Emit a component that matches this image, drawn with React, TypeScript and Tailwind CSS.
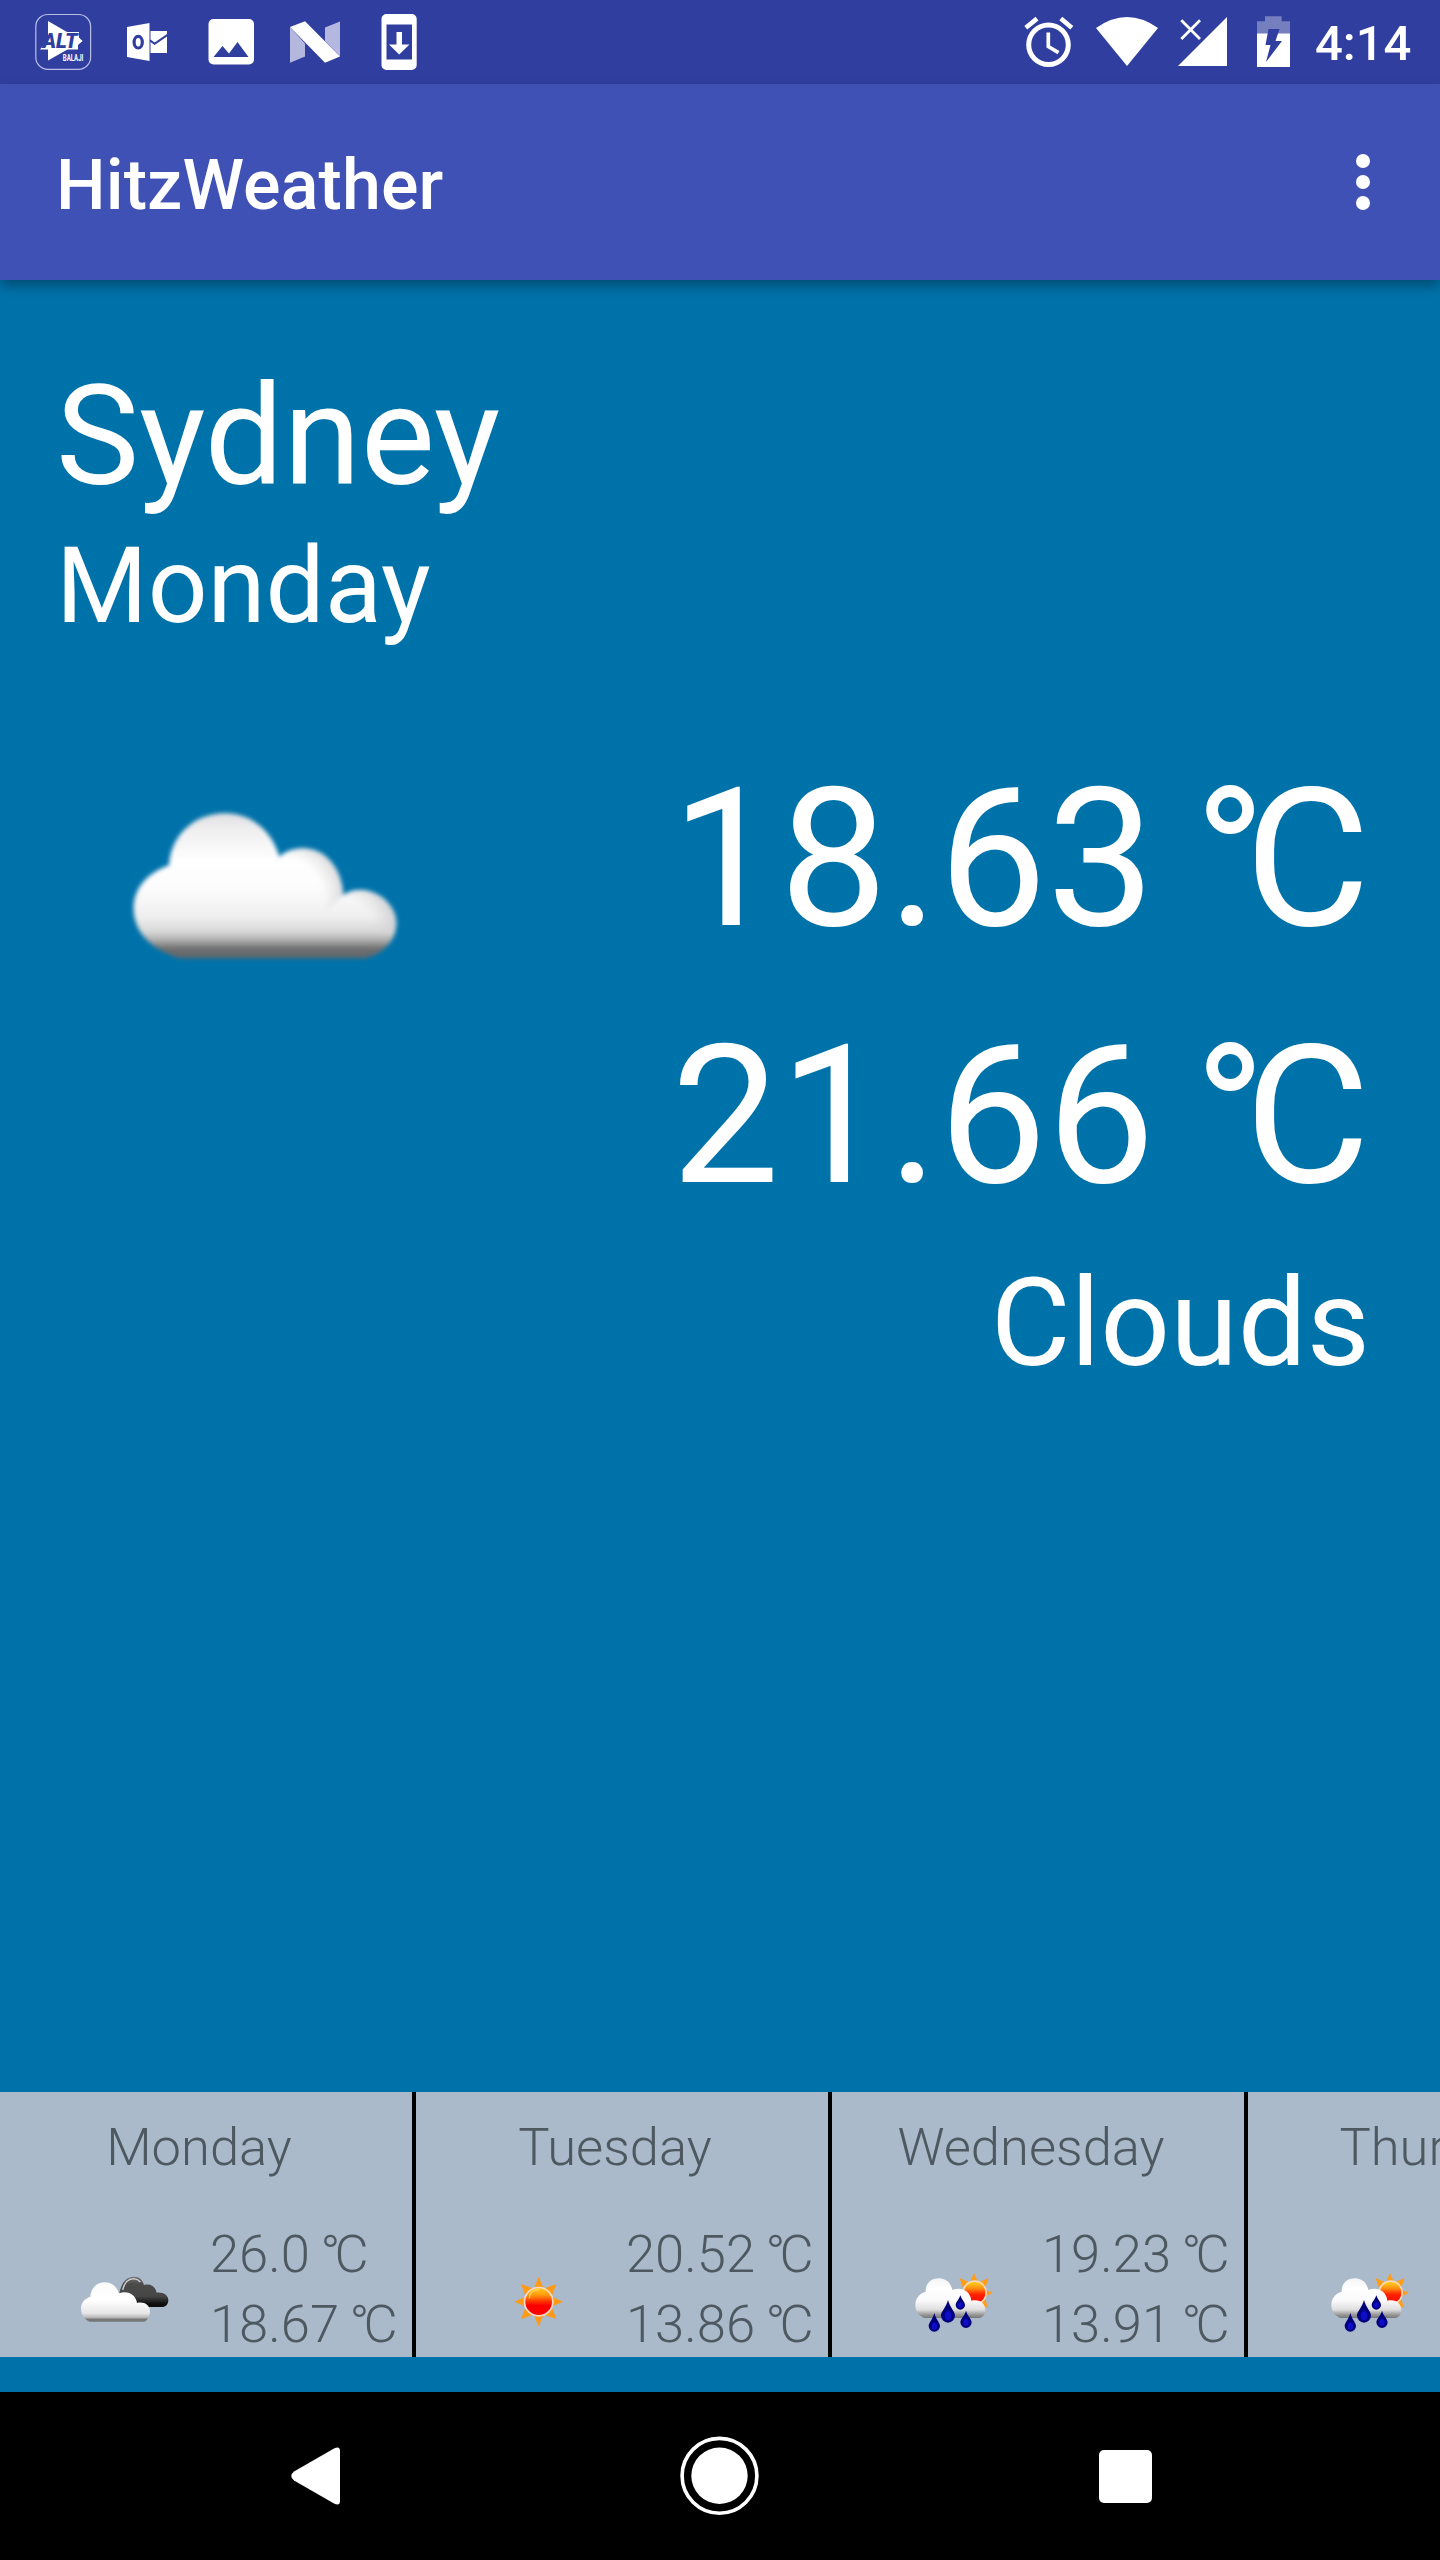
import React from "react";

function AltBalajiIcon() {
  return (
    <svg className="h-[84px] w-[84px]" viewBox="0 0 84 84">
      <rect x="14.800" y="14.500" width="54.800" height="54.800" rx="12" fill="none" stroke="#b9bfe4" strokeWidth="1.2" />
      <path d="M27 21 L61.5 41 L27 60.5 Z" fill="#fff" />
      <path d="M19 49.500 L33 32 H58 V37.500 L61.500 41 L57 45 V49.500 Z" fill="#fff" />
      <text
        x="21.500"
        y="47.600"
        fontFamily="Roboto, sans-serif"
        fontSize="19.500"
        fontWeight="900"
        fontStyle="italic"
        textLength="35"
        lengthAdjust="spacingAndGlyphs"
        fill="#303f9f"
      >
        ALT
      </text>
      <text
        x="41.8"
        y="61"
        fontFamily="Roboto, sans-serif"
        fontSize="9.2"
        fontWeight="700"
        textLength="20.5"
        lengthAdjust="spacingAndGlyphs"
        fill="#fff"
        stroke="#303f9f"
        strokeWidth="1.600"
        paintOrder="stroke"
      >
        BALAJI
      </text>
    </svg>
  );
}

function OutlookIcon() {
  return (
    <svg className="h-[84px] w-[84px]" viewBox="0 0 84 84">
      <path d="M22 27 L44.5 23 V61 L22 57 Z" fill="#fff" />
      <ellipse cx="33.2" cy="42.2" rx="4.1" ry="5.8" fill="none" stroke="#303f9f" strokeWidth="3.2" />
      <path d="M45.5 31 H62 V34 L49.6 42.5 L45.5 39.6 Z" fill="#fff" />
      <path d="M45.5 42 L49.6 45 L62 36.4 V53 H45.5 Z" fill="#fff" />
    </svg>
  );
}

function PictureIcon() {
  return (
    <svg className="h-[84px] w-[84px]" viewBox="0 0 84 84">
      <path
        fillRule="evenodd"
        d="M24.5 19 h35.5 a5 5 0 0 1 5 5 v35.500 a5 5 0 0 1 -5 5 h-35.500 a5 5 0 0 1 -5 -5 v-35.500 a5 5 0 0 1 5 -5 Z M24.500 57 H59.500 L48.500 42 L40 53.500 L33.500 46 Z"
        fill="#fff"
      />
    </svg>
  );
}

function NougatIcon() {
  return (
    <svg className="h-[84px] w-[84px]" viewBox="0 0 84 84">
      <path d="M17 27 L32 43.500 V56.500 L17 62.700 Z" fill="#b5b8de" />
      <path d="M52 27.500 L67 21.500 V56.500 L52 41 Z" fill="#b5b8de" />
      <path d="M17 27 L32 21.300 L67 56.500 L52 62.700 Z" fill="#fff" />
    </svg>
  );
}

function SystemUpdateIcon() {
  return (
    <svg className="h-[84px] w-[84px]" viewBox="0 0 84 84">
      <path
        fillRule="evenodd"
        d="M29.500 14 h25.200 a5 5 0 0 1 5 5 v46 a5 5 0 0 1 -5 5 h-25.200 a5 5 0 0 1 -5 -5 v-46 a5 5 0 0 1 5 -5 Z M29.500 24.500 V59.500 H55 V24.500 Z"
        fill="#fff"
      />
      <path d="M39.500 32 h5.500 v12.500 h7.500 L42.200 54.500 L32 44.500 h7.500 Z" fill="#fff" />
    </svg>
  );
}

function AlarmIcon() {
  return (
    <svg className="h-[84px] w-[80px]" viewBox="0 0 80 84">
      <circle cx="40.500" cy="44.700" r="19.800" fill="none" stroke="#fff" strokeWidth="5" />
      <path d="M40.300 32.500 V46.500 L50.500 52.700" fill="none" stroke="#fff" strokeWidth="3.700" />
      <path d="M17.800 27.800 L29 18.600 M52.800 18.600 L63.800 27.800" fill="none" stroke="#fff" strokeWidth="4.600" />
    </svg>
  );
}

function WifiIcon() {
  return (
    <svg className="h-[84px] w-[80px]" viewBox="0 0 80 84">
      <path d="M8 28 Q39 6 70 28 L39 66 Z" fill="#fff" />
    </svg>
  );
}

function SignalIcon() {
  return (
    <svg className="h-[84px] w-[72px]" viewBox="0 0 72 84">
      <path d="M59 17 V66 H10 Z" fill="#fff" />
      <path d="M13.300 20.300 L32 39 M32 20.300 L13.300 39" fill="none" stroke="#fff" strokeWidth="2.800" />
    </svg>
  );
}

function BatteryIcon() {
  return (
    <svg className="h-[84px] w-[75px]" viewBox="0 0 75 84">
      <path d="M17 34 V21.300 H25 V16.300 H41.700 V21.300 H50 V34 Z" fill="#757ebe" />
      <path d="M17 33.500 H50 V67 H17 Z" fill="#fff" />
      <path d="M28.500 29 H39.500 L35.500 41 H42 L26 62 L30.500 45 H25.500 Z" fill="#303f9f" />
    </svg>
  );
}

function CloudIcon() {
  return (
    <svg className="h-[210px] w-[340px]" viewBox="0 0 1020 630">
      <defs>
        <linearGradient id="cloudBody" gradientUnits="userSpaceOnUse" x1="0" y1="95" x2="0" y2="540">
          <stop offset="0" stopColor="#dedee0" />
          <stop offset="0.130" stopColor="#f0f0f1" />
          <stop offset="0.320" stopColor="#fefefe" />
          <stop offset="0.500" stopColor="#fdfdfd" />
          <stop offset="0.700" stopColor="#f0f0f0" />
          <stop offset="0.810" stopColor="#d8d8d8" />
          <stop offset="0.870" stopColor="#aaaaaa" />
          <stop offset="0.920" stopColor="#707070" />
          <stop offset="1" stopColor="#5f6468" />
        </linearGradient>
        <radialGradient id="cloudMid" gradientUnits="userSpaceOnUse" cx="540" cy="360" r="210">
          <stop offset="0.620" stopColor="#d8d8da" stopOpacity="0" />
          <stop offset="1" stopColor="#cfcfd2" />
        </radialGradient>
        <radialGradient id="cloudEnd" gradientUnits="userSpaceOnUse" cx="715" cy="470" r="190">
          <stop offset="0.600" stopColor="#d8d8da" stopOpacity="0" />
          <stop offset="1" stopColor="#cccccf" />
        </radialGradient>
        <clipPath id="cloudTopHalf">
          <rect x="0" y="0" width="1020" height="465" />
        </clipPath>
        <filter id="cloudSoft" x="-5%" y="-5%" width="110%" height="110%">
          <feGaussianBlur stdDeviation="6" />
        </filter>
      </defs>
      <g filter="url(#cloudSoft)">
        <path
          d="M240 535 C160 512 101 460 101 385 C101 325 143 278 207 256 C213 163 285 100 375 100 C455 100 516 153 538 230 C560 211 585 205 612 205 C680 208 726 268 730 346 C745 333 765 329 785 330 C840 333 889 378 889 430 C889 482 850 522 795 535 Z"
          fill="url(#cloudBody)"
        />
        <g clipPath="url(#cloudTopHalf)">
          <path d="M538 230 C560 211 585 205 612 205 C680 208 726 268 730 346 L650 420 L536 330 Z" fill="url(#cloudMid)" />
          <path d="M730 346 C745 333 765 329 785 330 C840 333 889 378 889 430 C889 445 884 460 876 475 L700 470 Z" fill="url(#cloudEnd)" />
        </g>
      </g>
    </svg>
  );
}

function BrokenCloudsIcon() {
  return (
    <svg className="h-[80px] w-[100px]" viewBox="219 552 300 240">
      <defs>
        <linearGradient id="darkCloud" gradientUnits="userSpaceOnUse" x1="0" y1="588" x2="0" y2="682">
          <stop offset="0" stopColor="#777" />
          <stop offset="0.250" stopColor="#4c4c4c" />
          <stop offset="0.650" stopColor="#454545" />
          <stop offset="0.880" stopColor="#111" />
          <stop offset="1" stopColor="#111" />
        </linearGradient>
        <linearGradient id="lightCloud" gradientUnits="userSpaceOnUse" x1="0" y1="605" x2="0" y2="728">
          <stop offset="0" stopColor="#fafafa" />
          <stop offset="0.450" stopColor="#fff" />
          <stop offset="0.770" stopColor="#e6e6e6" />
          <stop offset="0.870" stopColor="#bbb" />
          <stop offset="0.920" stopColor="#777" />
          <stop offset="1" stopColor="#777" />
        </linearGradient>
        <filter id="brokenSoft" x="-5%" y="-5%" width="110%" height="110%">
          <feGaussianBlur stdDeviation="1.800" />
        </filter>
      </defs>
      <g filter="url(#brokenSoft)">
        <path
          d="M358 640 C364 610 378 590 402 590 C418 590 428 600 432 615 C450 610 466 618 470 638 C490 636 505 646 505 660 C505 674 496 681 486 681 H400 Z"
          fill="url(#darkCloud)"
        />
        <path d="M368 630 C374 604 388 596 402 596 C410 597 416 600 421 606" fill="none" stroke="#d5d5d5" strokeWidth="4" />
        <path
          d="M268 725 C252 716 243 702 243 686 C243 668 254 656 271 650 C273 624 290 607 314 607 C336 607 350 620 357 640 C384 630 408 645 411 669 C432 664 450 675 450 694 C450 708 445 718 434 725 Z"
          fill="url(#lightCloud)"
        />
      </g>
    </svg>
  );
}

function SunIcon() {
  return (
    <svg className="h-[80px] w-[100px]" viewBox="267 552 300 240">
      <defs>
        <linearGradient id="sunBody" x1="0" y1="0" x2="0" y2="1">
          <stop offset="0" stopColor="#ffc61a" />
          <stop offset="0.250" stopColor="#ff9a10" />
          <stop offset="0.500" stopColor="#ff3000" />
          <stop offset="0.650" stopColor="#fb0000" />
          <stop offset="1" stopColor="#ff0800" />
        </linearGradient>
        <filter id="sunSoft" x="-10%" y="-10%" width="120%" height="120%">
          <feGaussianBlur stdDeviation="1.800" />
        </filter>
      </defs>
      <g filter="url(#sunSoft)">
        <path
          d="M416 590 L429 622 L403 622 Z M416 740 L429 708 L403 708 Z M343 665 L373 652 L373 678 Z M489 665 L459 652 L459 678 Z M363 612 L398 625 L376 647 Z M469 612 L434 625 L456 647 Z M363 717 L376 683 L398 705 Z M469 717 L456 683 L434 705 Z"
          fill="#ff9a14"
        />
        <circle cx="416" cy="665" r="45" fill="#f6dcc8" />
        <circle cx="416" cy="665" r="40" fill="url(#sunBody)" />
        <path d="M388 655 C389 637 402 629 418 629" fill="none" stroke="#ffd65a" strokeWidth="4" />
      </g>
    </svg>
  );
}

function Drop({ cx, top, bottom, r }: { cx: number; top: number; bottom: number; r: number }) {
  const cy = bottom - r;
  return (
    <g>
      <path
        d={`M${cx} ${top} C${cx + r * 0.3} ${cy - r * 1.1} ${cx + r} ${cy - r * 0.6} ${cx + r} ${cy} A${r} ${r} 0 0 1 ${cx - r} ${cy} C${cx - r} ${cy - r * 0.6} ${cx - r * 0.3} ${cy - r * 1.1} ${cx} ${top} Z`}
        fill="#00007c"
      />
      <ellipse cx={cx} cy={cy} rx={r * 0.5} ry={r * 0.65} fill="#0808c4" />
    </g>
  );
}

function SunRainIcon({ id }: { id: string }) {
  return (
    <svg className="h-[80px] w-[100px]" viewBox="0 0 300 240">
      <defs>
        <linearGradient id={`${id}-sun`} x1="0" y1="0" x2="0" y2="1">
          <stop offset="0" stopColor="#ffd020" />
          <stop offset="0.300" stopColor="#ff9010" />
          <stop offset="0.580" stopColor="#ff2000" />
          <stop offset="1" stopColor="#ff0800" />
        </linearGradient>
        <linearGradient id={`${id}-cloud`} gradientUnits="userSpaceOnUse" x1="0" y1="42" x2="0" y2="164">
          <stop offset="0" stopColor="#f4f4f4" />
          <stop offset="0.250" stopColor="#fff" />
          <stop offset="0.550" stopColor="#fafafa" />
          <stop offset="0.780" stopColor="#dedede" />
          <stop offset="0.900" stopColor="#9a9a9a" />
          <stop offset="1" stopColor="#707070" />
        </linearGradient>
        <filter id={`${id}-soft`} x="-5%" y="-5%" width="110%" height="110%">
          <feGaussianBlur stdDeviation="2" />
        </filter>
      </defs>
      <g filter={`url(#${id}-soft)`}>
        <path
          d="M207 27 L217 50 L197 50 Z M264 87 L241 77 L241 97 Z M164 43 L190 53 L173 70 Z M251 43 L241 70 L224 53 Z M249 132 L222 121 L241 104 Z"
          fill="#ff9d18"
        />
        <circle cx="209" cy="86" r="37" fill="#f8d8b8" />
        <circle cx="209" cy="86" r="32" fill={`url(#${id}-sun)`} />
        <path
          d="M58 162 C40 154 31 140 31 122 C31 102 44 88 62 83 C62 58 78 43 101 43 C124 43 138 58 142 78 C165 68 196 78 199 110 C224 104 241 118 241 137 C241 150 236 158 225 162 Z"
          fill={`url(#${id}-cloud)`}
        />
        <Drop cx={88} top={147} bottom={203} r={17} />
        <Drop cx={129} top={108} bottom={176} r={21} />
        <Drop cx={166} top={94} bottom={137} r={14} />
        <Drop cx={183} top={140} bottom={192} r={17} />
      </g>
    </svg>
  );
}

function Temperature({ value }: { value: string }) {
  return (
    <span>
      {value} <span className="-ml-[0.045em] tracking-[-0.11em]">°</span>C
    </span>
  );
}

type Forecast = { day: string; high?: string; low?: string; icon: React.ReactNode };

const forecasts: Forecast[] = [
  { day: "Monday", high: "26.0", low: "18.67", icon: <BrokenCloudsIcon /> },
  { day: "Tuesday", high: "20.52", low: "13.86", icon: <SunIcon /> },
  { day: "Wednesday", high: "19.23", low: "13.91", icon: <SunRainIcon id="wed" /> },
  { day: "Thursday", icon: <SunRainIcon id="thu" /> },
];

function ForecastCell({ day, high, low, icon }: Forecast) {
  return (
    <div className="flex h-[265px] w-[416px] shrink-0 flex-col border-r-4 border-black bg-[#aabacb] pt-6 text-[52.5px] font-light text-[#4e5860]">
      <div className="pr-[14px] text-center leading-[62px]">{day}</div>
      <div className="mt-[43px] flex">
        <div className="ml-[73px] mt-[43px] shrink-0">{icon}</div>
        <div className="ml-[37px] flex flex-col gap-1 whitespace-nowrap leading-[66px]">
          {high && <Temperature value={high} />}
          {low && <Temperature value={low} />}
        </div>
      </div>
    </div>
  );
}

export default function App() {
  return (
    <div className="flex h-[2560px] w-[1440px] flex-col overflow-hidden bg-[#0072aa] font-[Roboto,'Noto_Sans',sans-serif] text-white">
      <div className="flex h-[84px] shrink-0 items-center bg-[#303f9f] pl-[21px]">
        <AltBalajiIcon />
        <OutlookIcon />
        <PictureIcon />
        <NougatIcon />
        <SystemUpdateIcon />
        <div className="ml-auto flex items-center">
          <AlarmIcon />
          <WifiIcon />
          <SignalIcon />
          <BatteryIcon />
          <span className="w-[125px] pt-[4px] text-[49px] font-medium leading-[80px]">4:14</span>
        </div>
      </div>

      <header className="z-10 flex h-[196px] shrink-0 items-center justify-between bg-[#3f51b5] pl-14 pr-[70px] shadow-[0_6px_12px_rgba(0,0,0,0.32)]">
        <h1 className="pt-[6px] text-[70px] font-medium leading-[82px] tracking-[0.1px]">HitzWeather</h1>
        <svg className="h-[56px] w-[14px]" viewBox="0 0 14 56">
          <circle cx="7" cy="7" r="7" fill="#fff" />
          <circle cx="7" cy="28" r="7" fill="#fff" />
          <circle cx="7" cy="49" r="7" fill="#fff" />
        </svg>
      </header>

      <main className="flex h-[1812px] shrink-0 flex-col pt-[74px]">
        <div className="pl-14">
          <div className="text-[140px] leading-[164px]">Sydney</div>
          <div className="mt-[7px] text-[105px] leading-[123px]">Monday</div>
        </div>
        <div className="mt-[83px] flex items-start justify-between pl-[100px] pr-[70px]">
          <div className="mt-[49px]">
            <CloudIcon />
          </div>
          <div className="flex flex-col whitespace-nowrap text-right text-[192.5px] leading-[257px]">
            <Temperature value="18.63" />
            <Temperature value="21.66" />
            <span className="mt-[6px] text-[122.5px] leading-[144px]">Clouds</span>
          </div>
        </div>
      </main>

      <section className="flex h-[265px] shrink-0 overflow-hidden">
        {forecasts.map((f) => (
          <ForecastCell key={f.day} {...f} />
        ))}
      </section>

      <nav className="mt-[35px] flex h-[168px] shrink-0 items-center bg-black pl-[291px]">
        <svg className="h-[58px] w-[49px]" viewBox="0 0 49 58">
          <path d="M3 24.500 L43 1.500 Q49 -1.500 49 4 V54 Q49 59.500 43 56.500 L3 33.500 Q-2.500 29 3 24.500 Z" fill="#fff" />
        </svg>
        <svg className="ml-[339px] h-[80px] w-[80px]" viewBox="0 0 80 80">
          <circle cx="40.500" cy="39.800" r="37.400" fill="none" stroke="#fff" strokeWidth="3.600" />
          <circle cx="40.500" cy="39.800" r="28.200" fill="#fff" />
        </svg>
        <div className="ml-[340px] h-[53px] w-[53px] rounded-[5px] bg-white" />
      </nav>
    </div>
  );
}
